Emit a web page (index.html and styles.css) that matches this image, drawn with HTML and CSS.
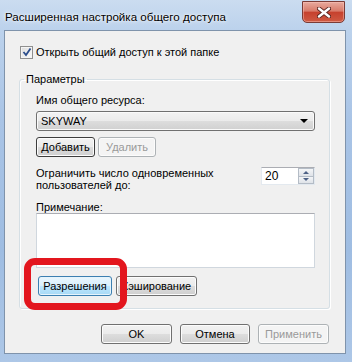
FILE: index.html
```html
<!DOCTYPE html>
<html lang="ru">
<head>
<meta charset="utf-8">
<title>Расширенная настройка общего доступа</title>
<link rel="stylesheet" href="styles.css">
</head>
<body>
<div class="window">
  <div class="titlebar">
    <span class="title">Расширенная настройка общего доступа</span>
    <button class="close" aria-label="Закрыть">
      <svg width="14" height="11" viewBox="0 0 14 11">
        <path d="M2 1.5 L12 9.5 M12 1.5 L2 9.5" stroke="#5a2420" stroke-width="4.2" stroke-linecap="round" fill="none"/>
        <path d="M2 1.5 L12 9.5 M12 1.5 L2 9.5" stroke="#ffffff" stroke-width="2.4" stroke-linecap="round" fill="none"/>
      </svg>
    </button>
  </div>
  <div class="client">
    <label class="check-row">
      <span class="checkbox">
        <svg width="10" height="10" viewBox="0 0 10 10"><path d="M1.5 5 L4 8 L8.5 1.5" stroke="#2b4d8c" stroke-width="1.8" fill="none"/></svg>
      </span>
      Открыть общий доступ к этой папке
    </label>
    <fieldset class="group">
      <legend>Параметры</legend>
      <div class="lbl">Имя общего ресурса:</div>
      <div class="combo"><span>SKYWAY</span><span class="arrow"></span></div>
      <div class="btn-row">
        <button class="btn btn-add">Добавить</button>
        <button class="btn btn-del" disabled>Удалить</button>
      </div>
      <div class="limit-row">
        <div class="limit-text">Ограничить число одновременных<br>пользователей до:</div>
        <div class="spin">
          <span class="spin-val">20</span>
          <div class="spin-btns">
            <span class="spin-btn"><span class="tri-up"></span></span>
            <span class="spin-btn"><span class="tri-down"></span></span>
          </div>
        </div>
      </div>
      <div class="lbl note-lbl">Примечание:</div>
      <div class="textarea"></div>
      <div class="btn-row perm-row">
        <button class="btn btn-focus btn-perm">Разрешения</button>
        <button class="btn btn-cache">Кэширование</button>
        <div class="highlight"></div>
      </div>
    </fieldset>
    <div class="footer">
      <button class="btn btn-foot">OK</button>
      <button class="btn btn-foot btn-cancel">Отмена</button>
      <button class="btn btn-foot" disabled>Применить</button>
    </div>
  </div>
</div>
</body>
</html>
```
FILE: styles.css
```css
html, body {
  margin: 0;
  padding: 0;
}
body {
  font: 11px/14px "Liberation Sans", Arial, sans-serif;
  color: #000;
  background: #fff;
}
.window {
  width: 352px;
  height: 362px;
  box-sizing: border-box;
  padding: 0 6px 8px 4px;
  display: flex;
  flex-direction: column;
  background: linear-gradient(180deg, #cbdcf0 0px, #bcd2ec 30px, #a9c4e6 120px, #9fbde2 250px, #adc7e7 362px);
}
.titlebar {
  height: 30px;
  flex: none;
  display: flex;
  align-items: flex-start;
}
.title {
  margin-top: 10px;
  padding-left: 1px;
  font-size: 11.6px;
  line-height: 14px;
  color: #000;
  text-shadow: 0 0 5px rgba(255,255,255,0.95), 0 0 2px rgba(255,255,255,0.9);
}
.close {
  margin-left: auto;
  margin-right: 1px;
  margin-top: 1px;
  width: 43px;
  height: 22px;
  box-sizing: border-box;
  padding: 0;
  border: 1px solid #7a3b35;
  border-radius: 0 0 5px 5px;
  background: linear-gradient(180deg, #e7aa9e 0%, #d97b6a 45%, #c6412e 52%, #cf5a43 100%);
  box-shadow: inset 0 0 0 1px rgba(255,200,190,0.45);
  display: flex;
  align-items: center;
  justify-content: center;
}
.client {
  flex: 1;
  background: #f0f0f0;
  border: 1px solid #7f93ab;
  display: flex;
  flex-direction: column;
}
.check-row {
  display: flex;
  align-items: center;
  margin-top: 14px;
  padding-left: 15px;
  height: 14px;
  line-height: 14px;
}
.checkbox {
  width: 11px;
  height: 11px;
  border: 1px solid #8f8f8f;
  background: linear-gradient(135deg, #dcdcdc, #fbfbfb);
  box-shadow: inset 0 0 0 1px #f4f4f4;
  margin-right: 3px;
  display: flex;
  align-items: center;
  justify-content: center;
}
.group {
  margin: 13px 15px 0 14px;
  padding: 7px 14px 12px 16px;
  border: 1px solid #d5dfe5;
  border-radius: 3px;
  box-shadow: inset 1px 1px 0 #fff, 1px 1px 0 #fff;
  min-width: 0;
}
.group legend {
  padding: 0 2px;
  margin-left: -12px;
  line-height: 14px;
}
.lbl {
  line-height: 15px;
}
.combo {
  margin-top: 3px;
  height: 20px;
  box-sizing: border-box;
  border: 1px solid #707070;
  border-radius: 3px;
  background: linear-gradient(180deg, #f3f3f3 0%, #ebebeb 50%, #dddddd 51%, #d0d0d0 100%);
  box-shadow: inset 0 0 0 1px #fafafa;
  display: flex;
  align-items: center;
  padding: 0 6px 0 4px;
}
.combo span:first-child {
  flex: 1;
}
.arrow {
  width: 0;
  height: 0;
  border-left: 4px solid transparent;
  border-right: 4px solid transparent;
  border-top: 4px solid #000;
}
.btn-row {
  display: flex;
  margin-top: 6px;
}
.btn {
  height: 20px;
  box-sizing: border-box;
  padding: 0 2px;
  font: 11px/18px "Liberation Sans", Arial, sans-serif;
  color: #000;
  border: 1px solid #707070;
  border-radius: 3px;
  background: linear-gradient(180deg, #f2f2f2 0%, #ebebeb 50%, #dddddd 51%, #cfcfcf 100%);
  box-shadow: inset 0 0 0 1px #fcfcfc;
  text-align: center;
}
.btn:disabled {
  color: #9a9a9a;
  border-color: #adb2b5;
  background: #f4f4f4;
  box-shadow: inset 0 0 0 1px #fcfcfc;
}
.btn-add {
  width: 59px;
  border-color: #3d3d3d;
}
.btn-del {
  width: 58px;
  margin-left: 3px;
}
.limit-row {
  display: flex;
  justify-content: space-between;
  align-items: flex-start;
  margin-top: 10px;
}
.limit-text {
  line-height: 12px;
}
.spin {
  display: flex;
  height: 18px;
  width: 54px;
  box-sizing: border-box;
  border: 1px solid #e3e9ef;
  border-top-color: #abadb3;
  background: #fff;
}
.spin-val {
  flex: 1;
  font-size: 12px;
  line-height: 16px;
  padding-left: 3px;
}
.spin-btns {
  width: 16px;
  display: flex;
  flex-direction: column;
}
.spin-btn {
  flex: 1;
  border: 1px solid #b4bcc6;
  background: linear-gradient(180deg, #f4f5f7, #dfe3e8);
  display: flex;
  align-items: center;
  justify-content: center;
}
.spin-btn + .spin-btn {
  border-top: 0;
}
.tri-up {
  border-left: 3px solid transparent;
  border-right: 3px solid transparent;
  border-bottom: 3px solid #4d6185;
}
.tri-down {
  border-left: 3px solid transparent;
  border-right: 3px solid transparent;
  border-top: 3px solid #4d6185;
}
.note-lbl {
  margin-top: 10px;
  line-height: 12px;
}
.textarea {
  height: 55px;
  box-sizing: border-box;
  border: 1px solid #d0d7de;
  border-top-color: #abadb3;
  background: #fff;
}
.perm-row {
  position: relative;
  margin-top: 8px;
  padding-left: 2px;
}
.btn-perm {
  width: 74px;
  border-color: #3c7fb1;
  background: linear-gradient(180deg, #eaf6fd 0%, #d9f0fc 50%, #bee6fd 51%, #a7d9f5 100%);
  box-shadow: inset 0 0 0 1px #e6f4fc;
}
.btn-cache {
  width: 81px;
  margin-left: 4px;
}
.highlight {
  position: absolute;
  left: -12px;
  top: -18px;
  width: 103px;
  height: 52px;
  box-sizing: border-box;
  border: 7px solid #e3161e;
  border-radius: 11px;
  pointer-events: none;
}
.footer {
  display: flex;
  justify-content: flex-end;
  gap: 8px;
  margin-top: 15px;
  padding-right: 16px;
}
.btn-foot {
  width: 71px;
}
.btn-cancel {
  width: 70px;
}
```
